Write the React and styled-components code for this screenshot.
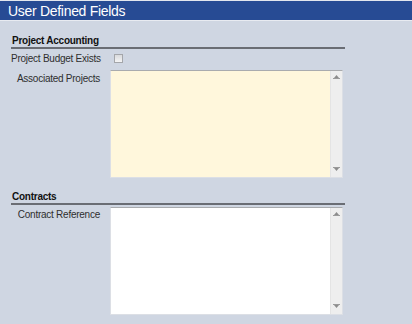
import React from "react";
import styled, { createGlobalStyle } from "styled-components";

const Global = createGlobalStyle`
  html, body { margin: 0; padding: 0; background: #cfd6e2; }
  body { font-family: "Liberation Sans", Arial, sans-serif; }
`;

const Page = styled.div`
  width: 412px;
  min-height: 324px;
  background: #cfd6e2;
`;

const Header = styled.div`
  height: 19px;
  border-top: 1px solid #e3e7ee;
  border-bottom: 1px solid #e8ebf1;
  background: #274b94;
  color: #ffffff;
  font-size: 14px;
  letter-spacing: -0.3px;
  line-height: 20px;
  padding-left: 8px;
`;

const Body = styled.div`
  padding: 14px 0 0 11px;
  width: 334px;
`;

const Section = styled.div`
  margin-bottom: ${p => p.$gap || 0}px;
`;

const SectionTitle = styled.div`
  font-size: 10px;
  letter-spacing: -0.25px;
  font-weight: bold;
  line-height: 12px;
  color: #111;
  padding-left: 1px;
  border-bottom: 2px solid #6a6d74;
`;

const Row = styled.div`
  display: grid;
  grid-template-columns: 89px 233px;
  column-gap: 10px;
  align-items: ${p => (p.$top ? "start" : "center")};
  margin-top: ${p => p.$mt || 0}px;
  height: ${p => (p.$h ? `${p.$h}px` : "auto")};
`;

const Label = styled.div`
  font-size: 10px;
  letter-spacing: -0.25px;
  line-height: 13px;
  color: #2e2e2e;
  text-align: right;
  padding-top: ${p => p.$pt || 0}px;
  white-space: nowrap;
`;

const Check = styled.span`
  display: block;
  width: 7px;
  height: 7px;
  margin-left: 4px;
  border: 1px solid #a4a6aa;
  background: linear-gradient(#d9dadc, #f4f4f5);
`;

const Area = styled.div`
  height: 106px;
  display: flex;
  background: ${p => p.$bg};
  border: 1px solid #dcdfe5;
  border-top-color: #a9abae;
`;

const AreaInner = styled.div`
  flex: 1;
`;

const Scroll = styled.div`
  width: 11px;
  background: #eeeeee;
  border-left: 1px solid #e4e4e4;
  display: flex;
  flex-direction: column;
  justify-content: space-between;
  align-items: center;
  padding: 4px 0 5px;
`;

const Arrow = ({ down }) => (
  <svg width="7" height="5" viewBox="0 0 7 5" style={{ display: "block" }}>
    {down ? (
      <>
        <rect x="0" y="0" width="7" height="1" fill="#9a9a9a" />
        <polygon points="1,1 6,1 3.5,4" fill="#8c8c8c" />
      </>
    ) : (
      <>
        <polygon points="3.5,0 6,3 1,3" fill="#8c8c8c" />
        <rect x="0" y="3" width="7" height="1" fill="#9a9a9a" />
      </>
    )}
  </svg>
);

const TextBox = ({ bg }) => (
  <Area $bg={bg}>
    <AreaInner />
    <Scroll>
      <Arrow />
      <Arrow down />
    </Scroll>
  </Area>
);

export default function App() {
  return (
    <Page>
      <Global />
      <Header>User Defined Fields</Header>
      <Body>
        <Section $gap={13}>
          <SectionTitle>Project Accounting</SectionTitle>
          <Row $mt={1} $h={16}>
            <Label>Project Budget Exists</Label>
            <Check />
          </Row>
          <Row $top $mt={4}>
            <Label $pt={2}>Associated Projects</Label>
            <TextBox bg="#fff7dc" />
          </Row>
        </Section>
        <Section>
          <SectionTitle>Contracts</SectionTitle>
          <Row $top $mt={2}>
            <Label $pt={1}>Contract Reference</Label>
            <TextBox bg="#ffffff" />
          </Row>
        </Section>
      </Body>
    </Page>
  );
}
